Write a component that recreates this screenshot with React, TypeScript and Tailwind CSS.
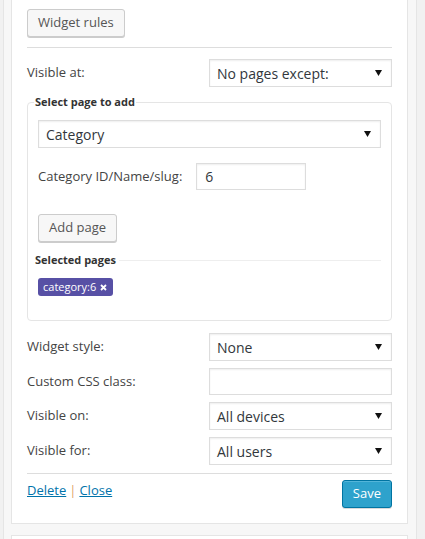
import React from "react";

const Arrow = () => (
  <svg width="7" height="6" viewBox="0 0 7 6" className="shrink-0">
    <path d="M0 0 H7 L3.5 6 Z" fill="#111" />
  </svg>
);

const Select = ({ value, className = "" }: { value: string; className?: string }) => (
  <div
    className={`flex h-[28px] items-center justify-between border border-[#ddd] bg-white pl-[7px] pr-[9px] text-[14px] text-[#32373c] shadow-[inset_0_1px_2px_rgba(0,0,0,0.07)] ${className}`}
  >
    <span>{value}</span>
    <Arrow />
  </div>
);

const Button = ({ children, className = "" }: { children: React.ReactNode; className?: string }) => (
  <div
    className={`inline-flex h-[28px] items-center rounded-[3px] border border-[#ccc] bg-[#f7f7f7] px-[10px] text-[13px] text-[#555] shadow-[0_1px_0_#ccc] ${className}`}
  >
    {children}
  </div>
);

const Row = ({ label, children }: { label: string; children: React.ReactNode }) => (
  <div className="flex items-center justify-between">
    <span className="text-[13px] text-[#444]">{label}</span>
    {children}
  </div>
);

export default function App() {
  return (
    <div
      className="h-[539px] overflow-hidden bg-[#f1f1f1]"
      style={{ fontFamily: '"Open Sans", "Noto Sans", sans-serif' }}
    >
      <div className="ml-[3px] h-full w-[414px] border-x border-[#e5e5e5] bg-[#f7f7f7] pl-[7px]">
        <div className="w-[397px] border-x border-b border-[#e5e5e5] bg-white px-[15px] pt-[9px] pb-[15px]">
          <Button>Widget rules</Button>
          <div className="mt-[10px] h-px bg-[#ddd]" />

          <div className="mt-[11px]">
            <Row label="Visible at:">
              <Select value="No pages except:" className="w-[183px]" />
            </Row>
          </div>

          <fieldset className="mt-[7px] w-[365px] rounded-[4px] border border-[#e5e5e5] px-[10px] pb-[24px] pt-[10px]">
            <legend className="-ml-[4px] px-px text-[11px] font-bold leading-[16px] text-[#333]">
              Select page to add
            </legend>
            <Select value="Category" className="w-[343px]" />
            <div className="mt-[15px] flex items-center">
              <span className="text-[13px] text-[#444]">Category ID/Name/slug:</span>
              <div className="ml-[14px] flex h-[27px] w-[110px] items-center border border-[#ddd] bg-white pl-[8px] text-[14px] text-[#32373c] shadow-[inset_0_1px_2px_rgba(0,0,0,0.07)]">
                6
              </div>
            </div>
            <div className="mt-[24px]">
              <Button>Add page</Button>
            </div>
            <div className="-ml-[3px] mt-[10px] flex items-center">
              <span className="text-[11px] font-bold leading-[16px] text-[#333]">Selected pages</span>
              <div className="ml-[3px] h-px flex-1 bg-[#eee]" />
            </div>
            <div className="mt-[10px] flex">
              <span className="inline-flex h-[18px] items-center gap-[4px] rounded-[3px] bg-[#5750a5] pl-[5px] pr-[6px] text-[11px] text-white">
                category:6
                <svg width="7" height="7" viewBox="0 0 7 7">
                  <path d="M1 1 L6 6 M6 1 L1 6" stroke="#fff" strokeWidth="1.8" />
                </svg>
              </span>
            </div>
          </fieldset>

          <div className="mt-[12px] flex flex-col gap-[7px]">
            <Row label="Widget style:">
              <Select value="None" className="w-[183px]" />
            </Row>
            <Row label="Custom CSS class:">
              <div className="h-[27px] w-[183px] border border-[#ddd] bg-white shadow-[inset_0_1px_2px_rgba(0,0,0,0.07)]" />
            </Row>
            <Row label="Visible on:">
              <Select value="All devices" className="w-[183px]" />
            </Row>
            <Row label="Visible for:">
              <Select value="All users" className="w-[183px]" />
            </Row>
          </div>

          <div className="mt-[8px] h-px bg-[#ddd]" />

          <div className="mt-[6px] flex items-start justify-between">
            <div className="mt-[1px] text-[13px]">
              <span className="text-[#0073aa] underline">Delete</span>
              <span className="mx-[3px] text-[#e0a56a]">|</span>
              <span className="text-[#0073aa] underline">Close</span>
            </div>
            <div className="flex h-[28px] items-center rounded-[3px] border border-[#0074a2] bg-[#2ea2cc] px-[10px] text-[13px] text-white shadow-[inset_0_1px_0_rgba(120,200,230,0.5),0_1px_0_rgba(0,0,0,0.15)]">
              Save
            </div>
          </div>
        </div>
        <div className="mt-[11px] h-[20px] w-[397px] border border-[#e5e5e5] bg-white" />
      </div>
    </div>
  );
}
